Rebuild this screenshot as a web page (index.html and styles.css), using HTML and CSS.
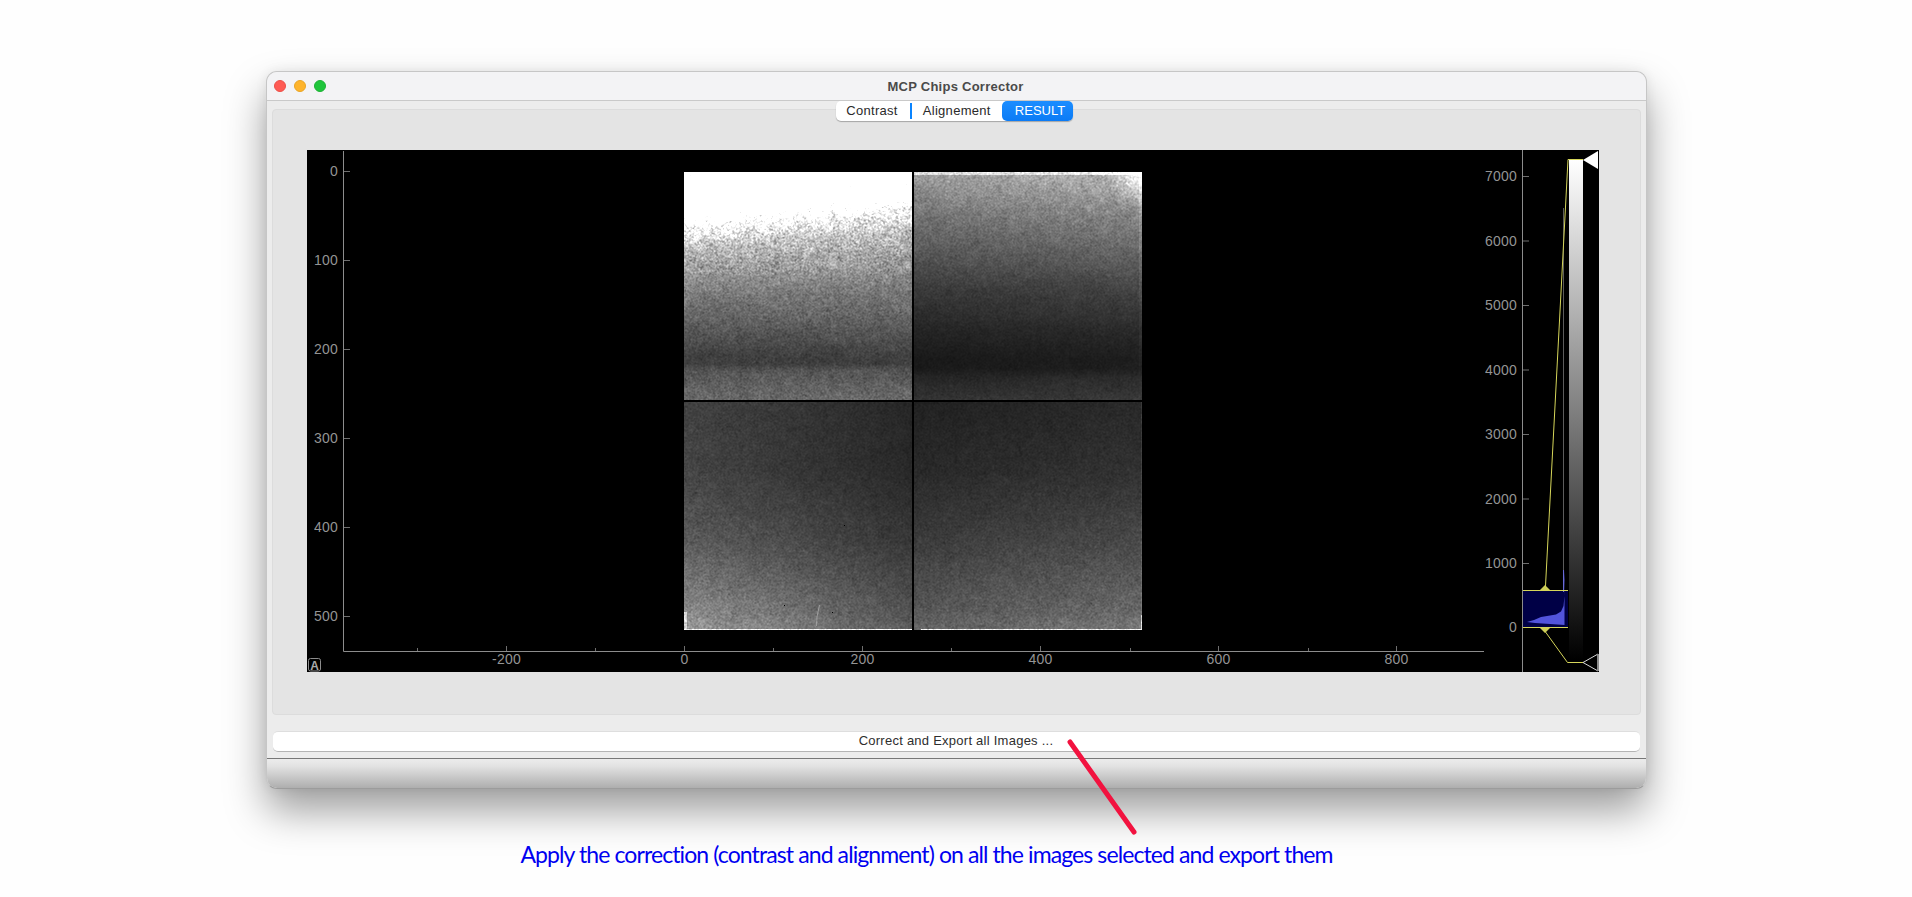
FILE: index.html
```html
<!DOCTYPE html>
<html lang="en">
<head>
<meta charset="utf-8">
<title>MCP Chips Corrector</title>
<link rel="stylesheet" href="styles.css">
</head>
<body>
<main class="window">
  <header class="titlebar">
    <div class="lights">
      <span class="light light-red"></span>
      <span class="light light-yellow"></span>
      <span class="light light-green"></span>
    </div>
    <h1 class="title">MCP Chips Corrector</h1>
  </header>
  <div class="content">
    <nav class="tabs">
      <span class="tab tab-contrast">Contrast</span>
      <span class="tab-sep"></span>
      <span class="tab tab-align">Alignement</span>
      <span class="tab tab-result">RESULT</span>
    </nav>
    <section class="panel">
      <div class="plot">
        <svg class="chart" width="1292" height="522" viewBox="307 150 1292 522" xmlns="http://www.w3.org/2000/svg">
          <defs>
            <linearGradient id="lut" x1="0" y1="0" x2="0" y2="1">
              <stop offset="0" stop-color="#ffffff"/>
              <stop offset="1" stop-color="#000000"/>
            </linearGradient>
          </defs>
          <!-- image axes -->
          <path class="axis" d="M343.5 151V651.5H1484"/>
          <path class="tick" d="M344 171.5h6M344 260.5h6M344 349.5h6M344 438.5h6M344 527.5h6M344 616.5h6"/>
          <path class="tick" d="M506.5 646v5M684.5 646v5M862.5 646v5M1040.5 646v5M1218.5 646v5M1396.5 646v5"/>
          <path class="tick" d="M417.5 648v3M595.5 648v3M773.5 648v3M951.5 648v3M1130.5 648v3M1308.5 648v3"/>
          <g class="labels labels-end">
            <text x="338" y="176">0</text>
            <text x="338" y="265">100</text>
            <text x="338" y="354">200</text>
            <text x="338" y="443">300</text>
            <text x="338" y="532">400</text>
            <text x="338" y="621">500</text>
          </g>
          <g class="labels labels-mid">
            <text x="506.5" y="664">-200</text>
            <text x="684.5" y="664">0</text>
            <text x="862.5" y="664">200</text>
            <text x="1040.5" y="664">400</text>
            <text x="1218.5" y="664">600</text>
            <text x="1396.5" y="664">800</text>
          </g>
          <!-- histogram axis -->
          <path class="axis" d="M1522.5 150V672"/>
          <path class="tick" d="M1523 176.5h6M1523 241h6M1523 305.5h6M1523 370h6M1523 434.5h6M1523 499h6M1523 563.5h6"/>
          <g class="labels labels-end">
            <text x="1517" y="181">7000</text>
            <text x="1517" y="246">6000</text>
            <text x="1517" y="310">5000</text>
            <text x="1517" y="375">4000</text>
            <text x="1517" y="439">3000</text>
            <text x="1517" y="504">2000</text>
            <text x="1517" y="568">1000</text>
            <text x="1517" y="632">0</text>
          </g>
          <!-- levels region and histogram -->
          <rect class="region" x="1523" y="590" width="45" height="37.5"/>
          <path class="histline-gray" d="M1563.5 208V570"/>
          <path class="histline-blue" d="M1563.5 570V592"/>
          <polygon class="hist" points="1527,622 1534,620 1541,617 1550,615.5 1556,614.5 1561,611.5 1563.5,606 1564.5,596 1565,580 1564.5,570 1564.5,625 1550,624 1535,623"/>
          <rect class="lut" x="1569" y="160" width="14" height="500"/>
          <path class="yellow" d="M1583 159.5H1568L1545.5 586"/>
          <path class="yellow" d="M1523 590.5H1568M1523 627.5H1568"/>
          <path class="yellow" d="M1545.5 632L1567.5 662.5H1583"/>
          <polygon class="handle" points="1540,590 1545,585 1550,590"/>
          <polygon class="handle" points="1540,628 1545,633 1550,628"/>
          <polygon class="grip-top" points="1583,160 1598,151 1598,169"/>
          <polygon class="grip-bottom" points="1583,662.5 1598,654 1598,671"/>
          <rect class="grip-edge" x="1597" y="654" width="2" height="17"/>
          <!-- auto button -->
          <rect class="auto-box" x="308.5" y="658.5" width="12" height="12.5" rx="2"/>
          <text class="auto-letter" x="314.5" y="669.5">A</text>
        </svg>
        <div class="tiles">
          <canvas class="tile" id="tile-0" width="228" height="228"></canvas>
          <canvas class="tile" id="tile-1" width="228" height="228"></canvas>
          <canvas class="tile" id="tile-2" width="228" height="228"></canvas>
          <canvas class="tile" id="tile-3" width="228" height="228"></canvas>
        </div>
      </div>
    </section>
    <button class="export" type="button">Correct and Export all Images ...</button>
  </div>
  <footer class="statusbar"></footer>
</main>
<p class="caption">Apply the correction (contrast and alignment) on all the images selected and export them</p>
<svg class="pointer" width="80" height="104" viewBox="0 0 80 104" xmlns="http://www.w3.org/2000/svg">
  <path class="pointer-line" d="M5 5L69 95"/>
</svg>
<script src="tiles.js"></script>
</body>
</html>
```
FILE: styles.css
```css
* { box-sizing: border-box; }

html, body {
  margin: 0;
  height: 897px;
  overflow: hidden;
}

body {
  position: relative;
  padding-top: 71px;
  background: #fefefe;
  font-family: "Liberation Sans", Arial, sans-serif;
}

.window {
  display: flex;
  flex-direction: column;
  width: 1381px;
  height: 718px;
  margin: 0 0 0 265.5px;
  background: #ececec;
  border: 1px solid #c6c6c6;
  border-bottom-color: #9c9c9c;
  border-radius: 11px;
  box-shadow: 0 22px 40px rgba(0, 0, 0, 0.38), 0 0 12px rgba(0, 0, 0, 0.07);
}

.titlebar {
  position: relative;
  display: flex;
  align-items: center;
  justify-content: center;
  flex: none;
  height: 29px;
  background: #f3f3f5;
  border-bottom: 1px solid #c9c9c9;
  border-radius: 10px 10px 0 0;
}

.lights {
  position: absolute;
  left: 7px;
  top: 8px;
  display: flex;
  gap: 8px;
}

.light {
  width: 12px;
  height: 12px;
  border-radius: 50%;
}

.light-red { background: #ff5b54; border: 1px solid #ec4f48; }
.light-yellow { background: #feb42c; border: 1px solid #e9a524; }
.light-green { background: #1fc53b; border: 1px solid #1cb134; }

.title {
  margin: 0 1px 0 0;
  font-size: 13px;
  font-weight: 700;
  letter-spacing: 0.25px;
  color: #4a4a4a;
}

.content {
  display: flex;
  flex-direction: column;
  flex: 1;
  min-height: 0;
}

.tabs {
  position: relative;
  z-index: 1;
  align-self: center;
  display: flex;
  align-items: stretch;
  flex: none;
  width: 237px;
  height: 20px;
  margin: 0 3px -12px 0;
  background: #fff;
  border-radius: 5px;
  box-shadow: 0 1px 1px rgba(0, 0, 0, 0.28);
  font-size: 13px;
  line-height: 20px;
  letter-spacing: 0.3px;
  color: #2a2a2a;
}

.tab {
  text-align: center;
}

.tab-contrast { width: 74px; padding-right: 2px; }
.tab-sep {
  width: 1.5px;
  margin: 2px 0;
  background: #0a84ff;
}
.tab-align { flex: 1; }
.tab-result {
  width: 71px;
  padding-left: 5px;
  letter-spacing: 0;
  color: #fff;
  background: linear-gradient(#1b8dff, #0b7bf5);
  border-radius: 5px;
}

.panel {
  flex: none;
  height: 606px;
  margin: 0 5px;
  padding: 40px 0 0 34px;
  background: #e4e4e4;
  border: 1px solid #dcdcdc;
  border-radius: 4px;
}

.plot {
  position: relative;
  width: 1292px;
  height: 522px;
  background: #000;
}

.chart {
  display: block;
}

.axis {
  fill: none;
  stroke: #8c8c8c;
  stroke-width: 1;
}

.tick {
  fill: none;
  stroke: #6f6f6f;
  stroke-width: 1;
}

.labels {
  opacity: 0.99;
}

.labels text {
  font-family: "Liberation Sans", Arial, sans-serif;
  font-size: 14px;
  letter-spacing: 0.2px;
  fill: #969696;
}

.labels-end { text-anchor: end; }
.labels-mid { text-anchor: middle; }

.region { fill: #000046; }
.hist { fill: #5254dc; }
.histline-gray { fill: none; stroke: #5c5c5c; stroke-width: 1; }
.histline-blue { fill: none; stroke: #6a6cd8; stroke-width: 1; }
.lut { fill: url(#lut); }
.yellow { fill: none; stroke: #d6d65a; stroke-width: 1; }
.handle { fill: #cfcf58; }
.grip-top { fill: #fff; }
.grip-bottom { fill: #000; stroke: #d8d8d8; stroke-width: 1; }
.grip-edge { fill: #8a8a8a; }

.auto-box { fill: none; stroke: #8c8c8c; stroke-width: 1; }
.auto-letter {
  font-family: "Liberation Sans", Arial, sans-serif;
  font-size: 12px;
  font-weight: 700;
  fill: #a8a8a8;
  text-anchor: middle;
}

.tiles {
  position: absolute;
  left: 377px;
  top: 22px;
  display: grid;
  grid-template-columns: 228px 228px;
  grid-auto-rows: 228px;
  gap: 2px;
}

.tile {
  display: block;
}

.export {
  flex: none;
  height: 21px;
  margin: 16px 6px 0;
  padding: 0 0 2px;
  background: #fff;
  border: 0;
  border-top: 1px solid #dedede;
  border-bottom: 1px solid #b4b4b4;
  border-radius: 5px;
  font-family: "Liberation Sans", Arial, sans-serif;
  font-size: 13px;
  line-height: 16px;
  letter-spacing: 0.25px;
  color: #2e2e2e;
}

.statusbar {
  flex: none;
  height: 30px;
  border-top: 1px solid #777;
  border-radius: 0 0 10px 10px;
  background: linear-gradient(#ececec, #e2e2e2 25%, #aeaeae);
}

.caption {
  width: 1912px;
  margin: 52px 0 0;
  padding-right: 59px;
  text-align: center;
  font-family: Lato, "Open Sans", sans-serif;
  font-size: 23px;
  line-height: 26px;
  letter-spacing: -0.9px;
  color: #0000f0;
}

.pointer {
  position: absolute;
  left: 1065px;
  top: 737px;
}

.pointer-line {
  fill: none;
  stroke: #f2123f;
  stroke-width: 5;
  stroke-linecap: round;
}
```
FILE: tiles.js
```js
// Synthesises the four detector tiles shown in the result view.
(function () {
  var SIZE = 228;
  var seed = 12345;

  function rnd() {
    seed = (seed * 1664525 + 1013904223) >>> 0;
    return seed / 4294967296;
  }

  function gauss() {
    return (rnd() + rnd() + rnd() + rnd() - 2) * 1.7;
  }

  function lerpStops(stops, t) {
    if (t <= stops[0][0]) return stops[0][1];
    for (var i = 1; i < stops.length; i++) {
      if (t <= stops[i][0]) {
        var a = stops[i - 1], b = stops[i];
        return a[1] + (b[1] - a[1]) * (t - a[0]) / (b[0] - a[0]);
      }
    }
    return stops[stops.length - 1][1];
  }

  function noiseField() {
    var CELL = 7, grid = [], n = Math.ceil(SIZE / CELL) + 2, x, y;
    for (y = 0; y < n * n; y++) grid.push(gauss());
    var raw = new Float32Array((SIZE + 1) * (SIZE + 1));
    for (y = 0; y < raw.length; y++) raw[y] = gauss();
    var out = new Float32Array(SIZE * SIZE);
    for (y = 0; y < SIZE; y++) {
      for (x = 0; x < SIZE; x++) {
        var i = y * (SIZE + 1) + x;
        var fine = (raw[i] + raw[i + 1] + raw[i + SIZE + 1] + raw[i + SIZE + 2]) / 2;
        var gx = x / CELL, gy = y / CELL, ix = Math.floor(gx), iy = Math.floor(gy);
        var fx = gx - ix, fy = gy - iy;
        var coarse =
          grid[iy * n + ix] * (1 - fx) * (1 - fy) +
          grid[iy * n + ix + 1] * fx * (1 - fy) +
          grid[(iy + 1) * n + ix] * (1 - fx) * fy +
          grid[(iy + 1) * n + ix + 1] * fx * fy;
        out[y * SIZE + x] = fine * 0.8 + coarse * 0.4;
      }
    }
    return out;
  }

  var tiles = [
    {
      amp: function (t) { return t < 0.45 ? 0.13 : 0.1; },
      base: function (u, t) {
        var s = t + (u - 0.5) * 0.13 * Math.max(0, 1 - t * 1.6);
        return lerpStops([[0, 420], [0.12, 400], [0.2, 265], [0.3, 192], [0.5, 128], [0.7, 86],
          [0.8, 64], [0.84, 62], [0.87, 84], [0.92, 94], [1, 104]], s);
      }
    },
    {
      amp: function () { return 0.08; },
      base: function (u, t) {
        var v = lerpStops([[0, 172], [0.05, 160], [0.2, 122], [0.35, 94], [0.5, 64], [0.7, 38],
          [0.82, 27], [0.86, 28], [0.9, 40], [1, 54]], t) * (0.92 + 0.16 * u);
        var corner = Math.max(0, 1 - Math.hypot(1 - u, t) * 6);
        var top = t < 0.012 ? 60 : 0;
        return v + corner * 80 + top + (u > 0.985 ? 25 * (1 - t) : 0);
      }
    },
    {
      amp: function () { return 0.085; },
      base: function (u, t) {
        var v = lerpStops([[0, 52], [0.3, 54], [0.6, 72], [0.9, 108], [1, 122]], t) * (1.26 - 0.52 * u);
        if (t > 0.9935) return 250;
        if (u < 0.01 && t > 0.92) return 215;
        return v;
      }
    },
    {
      amp: function () { return 0.085; },
      base: function (u, t) {
        var v = lerpStops([[0, 36], [0.3, 44], [0.6, 64], [0.9, 92], [1, 108]], t) * (0.92 + 0.2 * u);
        if (t > 0.9935 && u > 0.03) return 240;
        if (u > 0.992 && t > 0.93) return 205;
        return v + (u > 0.992 ? 16 : 0);
      }
    }
  ];

  function paint(index) {
    var cfg = tiles[index];
    var ctx = document.getElementById("tile-" + index).getContext("2d");
    var img = ctx.createImageData(SIZE, SIZE);
    var noise = noiseField();
    for (var y = 0; y < SIZE; y++) {
      var t = y / SIZE;
      for (var x = 0; x < SIZE; x++) {
        var u = x / SIZE;
        var b = cfg.base(u, t);
        var v = b * (1 + cfg.amp(t) * noise[y * SIZE + x]);
        v = Math.max(0, Math.min(255, v));
        var p = (y * SIZE + x) * 4;
        img.data[p] = img.data[p + 1] = img.data[p + 2] = v;
        img.data[p + 3] = 255;
      }
    }
    ctx.putImageData(img, 0, 0);
  }

  for (var i = 0; i < tiles.length; i++) paint(i);

  // Scratch and dead pixels on the lower-left tile.
  var c = document.getElementById("tile-2").getContext("2d");
  c.strokeStyle = "rgba(190,190,190,0.6)";
  c.beginPath();
  c.moveTo(135.5, 203);
  c.lineTo(133, 215);
  c.lineTo(132.5, 224);
  c.stroke();
  c.fillStyle = "#000";
  c.fillRect(160, 123, 1, 1);
  c.fillRect(148, 210, 1, 1);
  c.fillRect(100, 203, 1, 1);
})();
```
